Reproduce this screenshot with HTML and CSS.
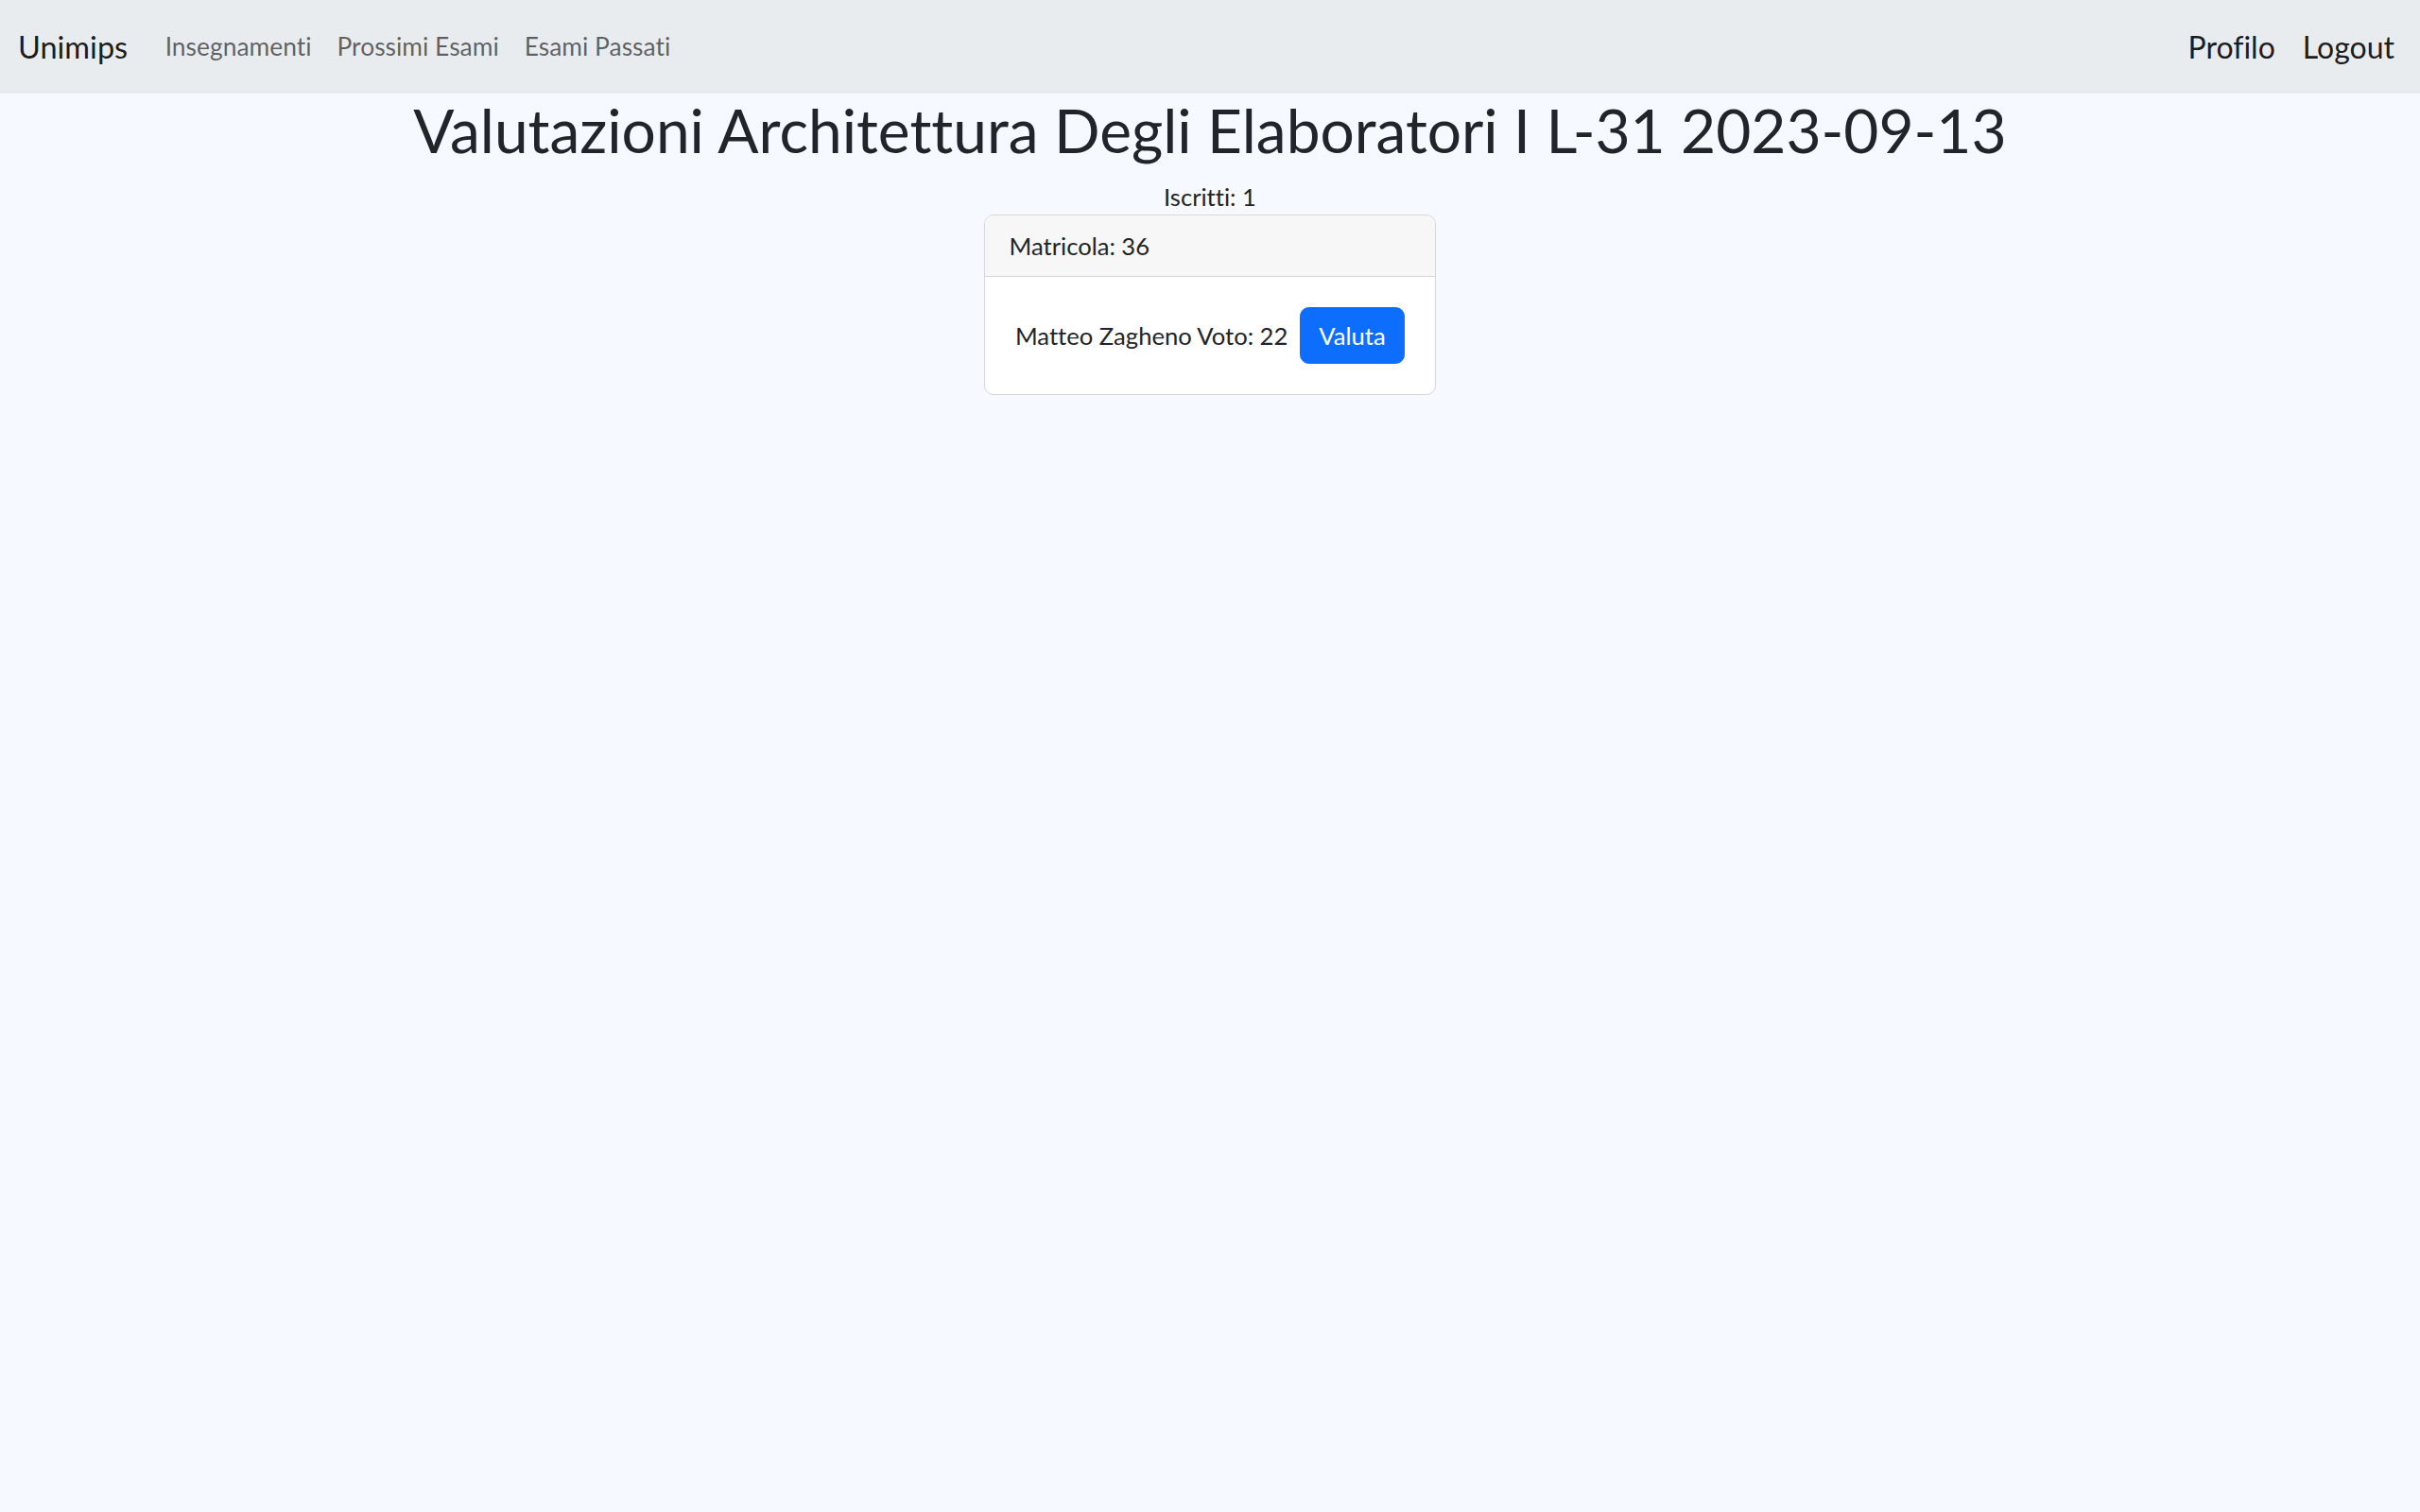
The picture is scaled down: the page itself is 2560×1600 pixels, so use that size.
FILE: index.html
```html
<!DOCTYPE html>
<html lang="it">
<head>
<meta charset="utf-8">
<title>Valutazioni</title>
<link rel="stylesheet" href="styles.css">
</head>
<body>
<nav class="navbar">
  <div class="nav-left">
    <a class="brand" href="#">Unimips</a>
    <ul class="nav-links">
      <li><a class="nav-link" href="#">Insegnamenti</a></li>
      <li><a class="nav-link" href="#">Prossimi Esami</a></li>
      <li><a class="nav-link" href="#">Esami Passati</a></li>
    </ul>
  </div>
  <ul class="nav-right">
    <li><a class="nav-link-strong" href="#">Profilo</a></li>
    <li><a class="nav-link-strong" href="#">Logout</a></li>
  </ul>
</nav>
<main class="page">
  <h1 class="title">Valutazioni Architettura Degli Elaboratori I L-31 2023-09-13</h1>
  <p class="count">Iscritti: 1</p>
  <div class="card">
    <div class="card-header">Matricola: 36</div>
    <div class="card-body">
      <span class="item">Matteo Zagheno Voto: 22</span>
      <button class="btn item" type="button">Valuta</button>
    </div>
  </div>
</main>
</body>
</html>
```
FILE: styles.css
```css
* { box-sizing: border-box; }
html, body { margin: 0; padding: 0; }
body {
  background: #f6f9ff;
  font-family: Lato, "Open Sans", sans-serif;
  font-size: 25.6px;
  line-height: 1.5;
  color: #212529;
  min-height: 1600px;
  font-variant-ligatures: none;
}
a { text-decoration: none; }
ul { list-style: none; margin: 0; padding: 0; }

.navbar {
  height: 99px;
  background: #e9ecef;
  display: flex;
  align-items: center;
  justify-content: space-between;
  padding: 0 27px 0 19px;
}
.nav-left { display: flex; align-items: center; }
.brand {
  font-size: 32.5px;
  color: rgba(0,0,0,.9);
  margin-right: 26px;
  line-height: 48px;
}
.nav-links { display: flex; }
.nav-link {
  display: block;
  padding: 0 13.5px;
  color: rgba(0,0,0,.6);
  font-size: 26.4px;
}
.nav-right { display: flex; gap: 29px; }
.nav-link-strong {
  font-size: 32px;
  color: rgba(0,0,0,.9);
  line-height: 48px;
}

.page { display: flex; flex-direction: column; align-items: center; }
.title {
  margin: 0 0 12px;
  font-weight: 400;
  font-size: 64px;
  line-height: 1.2;
  text-align: center;
  padding-top: 1px;
}
.count { margin: 0; line-height: 38px; }
.card {
  width: 478px;
  background: #fff;
  border: 1.6px solid #d6d6d6;
  border-radius: 10px;
  overflow: hidden;
}
.card-header {
  background: #f7f7f7;
  border-bottom: 1.6px solid #d6d6d6;
  padding: 12.8px 25.6px;
  line-height: 38.4px;
}
.card-body {
  padding: 25.6px;
  display: flex;
  align-items: center;
}
.item { margin: 6.4px; }
.btn {
  font: inherit;
  color: #fff;
  background: #0d6efd;
  border: 1.6px solid #0d6efd;
  border-radius: 9.6px;
  padding: 10px 19.2px;
  line-height: 38.4px;
}
```
